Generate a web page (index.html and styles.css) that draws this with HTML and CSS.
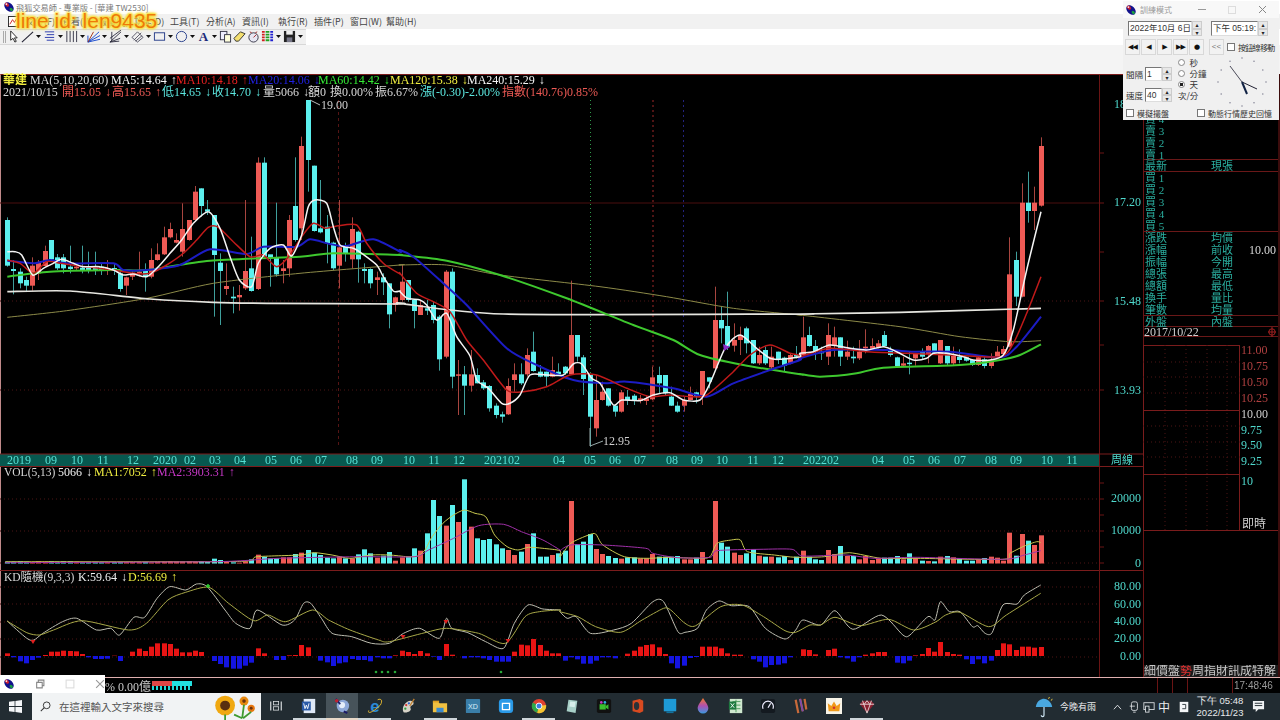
FILE: index.html
```html
<!DOCTYPE html>
<html lang="zh-Hant">
<head>
<meta charset="utf-8">
<title>飛狐交易師</title>
<link rel="stylesheet" href="styles.css">
</head>
<body>
<svg class="defs" width="0" height="0" aria-hidden="true">
  <symbol id="gem" viewBox="0 0 14 14">
    <ellipse cx="7" cy="7" rx="6.4" ry="4.4" transform="rotate(45 7 7)" fill="#12128c"/>
    <ellipse cx="4.6" cy="4.2" rx="2.8" ry="2" transform="rotate(45 4.6 4.2)" fill="#d02030"/>
    <ellipse cx="9.6" cy="10" rx="2.2" ry="1.6" transform="rotate(45 9.6 10)" fill="#18a040"/>
    <circle cx="4" cy="3.6" r="1" fill="#f4f4ff"/>
  </symbol>
  <symbol id="dd" viewBox="0 0 5 3"><path d="M0 0h5L2.500 3z" fill="#111"/></symbol>
</svg>
<div class="screen">
  <header class="titlebar">
    <svg class="ico13"><use href="#gem"/></svg>
    <span>飛狐交易師 - 專業版 - [華建 TW2530]</span>
  </header>
  <nav class="menubar">
    <svg class="doc" viewBox="0 0 12 12"><rect x=".5" y=".5" width="11" height="11" fill="#fff" stroke="#222"/><path d="M2 9l3-5 2 3 3-5" fill="none" stroke="#d02020"/></svg>
    <span>文件(F)</span><span>查看(V)</span><span>報價(Q)</span><span>功能(D)</span>
    <span>工具(T)</span><span>分析(A)</span><span>資訊(I)</span><span>執行(R)</span><span>插件(P)</span><span>窗口(W)</span><span>幫助(H)</span>
  </nav>
  <div class="toolbar">
    <i class="grip"></i>
    <svg class="tb" viewBox="0 0 14 14"><path d="M4 1v10l2.500-2 2 4 1.500-.8-2-3.700h3z" fill="#fff" stroke="#222"/></svg>
    <svg class="tb" viewBox="0 0 14 14"><path d="M1 13L13 2" stroke="#223" stroke-width="1.200"/></svg><svg class="dd"><use href="#dd"/></svg>
    <svg class="tb" viewBox="0 0 14 14"><path d="M2 2h10M4 5h8M2 8h10M4 11h8" stroke="#2233aa"/></svg><svg class="dd"><use href="#dd"/></svg>
    <svg class="tb" viewBox="0 0 14 14"><path d="M2 1v12M5.500 1v12M9 1v12M12.500 1v12" stroke="#334"/></svg><svg class="dd"><use href="#dd"/></svg>
    <svg class="tb" viewBox="0 0 14 14"><path d="M1 13L13 2M1 13L14 6M1 13l13-3M1 13V6" stroke="#1144cc"/><path d="M1 13L7 2" stroke="#a03010"/></svg><svg class="dd"><use href="#dd"/></svg>
    <svg class="tb" viewBox="0 0 14 14"><path d="M1 13L13 2M1 9L13 0M1 13L12 9M1 13l10-1M3 2v11" stroke="#334"/></svg><svg class="dd"><use href="#dd"/></svg>
    <svg class="tb" viewBox="0 0 14 14"><path d="M1 8l6-6 6 6-6 5z" fill="none" stroke="#556"/><path d="M3 11l8-8M5 12l7-6" stroke="#556"/></svg><svg class="dd"><use href="#dd"/></svg>
    <svg class="tb" viewBox="0 0 14 14"><rect x="1.500" y="3" width="11" height="8" fill="none" stroke="#223a88"/></svg><svg class="dd"><use href="#dd"/></svg>
    <svg class="tb" viewBox="0 0 14 14"><circle cx="7" cy="7" r="5.500" fill="none" stroke="#223a88"/></svg><svg class="dd"><use href="#dd"/></svg>
    <span class="tb-a">A</span><svg class="dd"><use href="#dd"/></svg>
    <svg class="tb" viewBox="0 0 14 14"><rect x="1.500" y="1.500" width="7" height="9" fill="#eef" stroke="#334"/><rect x="6" y="5" width="6.500" height="8" fill="#ffd" stroke="#334"/></svg>
    <svg class="tb" viewBox="0 0 14 14"><path d="M1 9l7-7 5 2-7 8H3z" fill="#f4e070" stroke="#333"/></svg>
    <svg class="tb" viewBox="0 0 14 14"><circle cx="7" cy="8" r="5" fill="#e8e8f4" stroke="#334"/><path d="M7 8l3-3M3 2l2 1M11 2L9 3" stroke="#a02020"/></svg>
    <svg class="tb" viewBox="0 0 14 14"><path d="M1 2h3M1 5h3M1 8h3M1 11h3" stroke="#d02020" stroke-width="2"/><path d="M5 2h4M5 5h4M5 8h4M5 11h4" stroke="#20a020" stroke-width="2"/><path d="M10 2h3M10 5h3M10 8h3M10 11h3" stroke="#2020d0" stroke-width="2"/></svg><svg class="dd"><use href="#dd"/></svg>
    <svg class="tb" viewBox="0 0 14 14"><path d="M1 1h12v12H1z" fill="#222"/><rect x="3.500" y="1" width="7" height="4" fill="#eee"/><rect x="4" y="8" width="6" height="5" fill="#778"/></svg><svg class="dd"><use href="#dd"/></svg>
  </div>
  <div class="blank"></div>

  <main class="workspace">
    <section class="charts">
      <svg id="price" class="pane pane-price" viewBox="0 75 1143 392"></svg>
      <svg id="vol" class="pane pane-vol" viewBox="0 467 1143 103"></svg>
      <svg id="kd" class="pane pane-kd" viewBox="0 570 1143 107"></svg>
    </section>
    <aside class="quote">
      <div class="q-head"></div>
      <div class="q-sec q-5">
        <div class="q-row"><span>賣 5</span></div><div class="q-row"><span>賣 4</span></div><div class="q-row"><span>賣 3</span></div><div class="q-row"><span>賣 2</span></div><div class="q-row"><span>賣 1</span></div>
      </div>
      <div class="q-sec">
        <div class="q-row"><span>最新</span><span>現張</span></div>
      </div>
      <div class="q-sec">
        <div class="q-row"><span>買 1</span></div><div class="q-row"><span>買 2</span></div><div class="q-row"><span>買 3</span></div><div class="q-row"><span>買 4</span></div><div class="q-row"><span>買 5</span></div>
      </div>
      <div class="q-sec">
        <div class="q-row"><span>漲跌</span><span>均價</span></div>
        <div class="q-row"><span>漲幅</span><span>前收</span><b>10.00</b></div>
        <div class="q-row"><span>振幅</span><span>今開</span></div>
        <div class="q-row"><span>總張</span><span>最高</span></div>
        <div class="q-row"><span>總額</span><span>最低</span></div>
        <div class="q-row"><span>換手</span><span>量比</span></div>
        <div class="q-row"><span>筆數</span><span>均量</span></div>
      </div>
      <div class="q-sec q-out">
        <div class="q-row"><span>外盤</span><span>內盤</span></div>
      </div>
      <div class="q-date"><span>2017/10/22</span><svg viewBox="0 0 8 10"><circle cx="4" cy="5" r="3.200" fill="none" stroke="#a02020"/><path d="M4 0v10M0 5h8" stroke="#a02020"/></svg></div>
      <svg id="mini" class="mini" viewBox="1143 346 135 186"></svg>
      <div class="q-fill"></div>
      <div class="q-tabs"><span>細</span><span>價</span><span>盤</span><span class="on">勢</span><span>周</span><span>指</span><span>財</span><span>訊</span><span>成</span><span>特</span><span>解</span></div>
    </aside>
  </main>

  <footer class="status">
    <div class="chip">
      <svg class="ico13"><use href="#gem"/></svg>
      <svg class="chip-i" viewBox="0 0 9 9"><path d="M1.500 3h5v5h-5zM3 3V1h5v5H6.500" fill="none" stroke="#888"/></svg>
      <svg class="chip-i" viewBox="0 0 9 9"><rect x="1" y="1" width="7" height="7" fill="none" stroke="#ddd"/></svg>
      <svg class="chip-i" viewBox="0 0 9 9"><path d="M1 1l7 7M8 1L1 8" stroke="#999"/></svg>
    </div>
    <span class="st-text">% 0.00億</span>
    <div class="meter"><div class="m-top"><i></i><i></i></div><div class="m-ticks"></div></div>
    <div class="st-right"><i></i><i></i><i></i><i></i><span>17:48:46</span></div>
  </footer>

  <div class="taskbar">
    <svg class="start" viewBox="0 0 13 13"><path d="M0 1.800L5.600 1v5.100H0zM6.400.9L13 0v6.100H6.400zM0 6.900h5.600V12L0 11.200zM6.400 6.900H13V13l-6.600-.9z" fill="#f4f6f8"/></svg>
    <div class="search">
      <svg class="mag" viewBox="0 0 14 14"><circle cx="8.500" cy="5.500" r="4.300" fill="none" stroke="#333" stroke-width="1.200"/><path d="M5.500 8.500L1 13" stroke="#333" stroke-width="1.300"/></svg>
      <span>在這裡輸入文字來搜尋</span>
      <svg class="flower" viewBox="0 0 46 30">
        <g fill="#f0a810"><circle cx="12" cy="14" r="11"/></g><circle cx="12" cy="14" r="5.500" fill="#5a2e10"/>
        <circle cx="33" cy="9" r="5" fill="#e88a10"/><circle cx="33" cy="9" r="2" fill="#6a3410"/>
        <circle cx="41" cy="17" r="4" fill="#e87810"/><circle cx="41" cy="17" r="1.600" fill="#6a3410"/>
        <path d="M33 13l-2 15M41 21l-9 7M22 24l9 4M12 24v6" stroke="#3f9a30" stroke-width="2" fill="none"/>
      </svg>
    </div>
    <div class="tasks">
      <div class="task tv"><svg viewBox="0 0 16 14"><path d="M1 1v12M15 1v12" stroke="#dfe3e6" stroke-width="1.500"/><rect x="4.500" y="1" width="7" height="4.500" fill="none" stroke="#dfe3e6"/><rect x="4.500" y="8" width="7" height="4.500" fill="none" stroke="#dfe3e6"/></svg></div>
      <div class="task run"><svg viewBox="0 0 18 18"><rect x="3" y="1" width="13" height="16" fill="#dfe8f6"/><rect x="1" y="4" width="10" height="10" fill="#2a5aa8"/><path d="M3 6l1.500 6 1.500-4 1.500 4L9 6" fill="none" stroke="#fff"/></svg></div>
      <div class="task active"><svg viewBox="0 0 18 18"><circle cx="10" cy="9" r="7" fill="#8ea8d8"/><circle cx="9" cy="8" r="3.500" fill="#e6eefa"/><path d="M2 1l5 6M11 15l4 2" stroke="#1a1a6a" stroke-width="2"/><circle cx="3" cy="3" r="2" fill="#c02030"/></svg></div>
      <div class="task run"><svg viewBox="0 0 18 18"><text x="9" y="15.500" text-anchor="middle" class="ie">e</text><path d="M2 14C0 18 6 17 15 8 18 3 16 0 12 2" fill="none" stroke="#f2c230"/></svg></div>
      <div class="task"><svg viewBox="0 0 18 18"><path d="M4 16C1 10 7 3 12 3c4 0 4 4 2 5s-3 2-2 4-3 5-8 4z" fill="#d8d4c8"/><circle cx="7" cy="8" r="1.300" fill="#d03030"/><circle cx="10" cy="6" r="1.300" fill="#3060d0"/><circle cx="6" cy="12" r="1.300" fill="#30a040"/><path d="M16 1l-5 8" stroke="#c08030" stroke-width="1.500"/></svg></div>
      <div class="task run"><svg viewBox="0 0 18 18"><path d="M1 4h6l1.500 2H17v10H1z" fill="#f0c040"/><rect x="1" y="3" width="7" height="2" fill="#e0a020"/><rect x="5" y="11" width="8" height="5" fill="#3a8ad0"/></svg></div>
      <div class="task"><svg viewBox="0 0 18 18"><rect x="1" y="1" width="16" height="16" rx="1" fill="#3a7ea8"/><text x="9" y="12.500" text-anchor="middle" class="xo">XD</text></svg></div>
      <div class="task"><svg viewBox="0 0 18 18"><rect x="1" y="1" width="16" height="16" rx="4" fill="#2a9ae8"/><path d="M5 6h8v7H5z" fill="none" stroke="#fff" stroke-width="1.500"/></svg></div>
      <div class="task run"><svg viewBox="0 0 18 18"><circle cx="9" cy="9" r="8" fill="#e04030"/><path d="M9 9L2 5a8 8 0 0 0 5 11.800z" fill="#2ea84a"/><path d="M9 9l8-1a8 8 0 0 1-10 8.800z" fill="#f4c430"/><circle cx="9" cy="9" r="3.300" fill="#3a7be0" stroke="#fff"/></svg></div>
      <div class="task"><svg viewBox="0 0 18 18"><path d="M5 2l10 1-2 14-10-2z" fill="#a8d0c8"/><path d="M7 4l6 .5-1 6-6-1z" fill="#d6eeea"/></svg></div>
      <div class="task"><svg viewBox="0 0 18 18"><rect x="1" y="1" width="16" height="16" rx="2" fill="#111"/><rect x="4" y="7" width="7" height="6" fill="#3ac030"/><path d="M11 9l3-2v6l-3-2z" fill="#3ac030"/><circle cx="6" cy="5" r="1.500" fill="#c83ac0"/><circle cx="10" cy="5" r="1.500" fill="#30b0e0"/></svg></div>
      <div class="task"><svg viewBox="0 0 18 18"><path d="M4 3l8-2 4 2v12l-4 2-8-2z" fill="#d84a20"/><ellipse cx="8.500" cy="9" rx="3" ry="4.500" fill="#2a3238"/></svg></div>
      <div class="task"><svg viewBox="0 0 18 18"><rect x="2" y="1" width="14" height="14" fill="#1e9ad6"/><rect x="5" y="15" width="8" height="2" fill="#14729e"/></svg></div>
      <div class="task"><svg viewBox="0 0 18 18"><defs><linearGradient id="drop" x1="0" y1="0" x2="0" y2="1"><stop offset="0" stop-color="#f0782a"/><stop offset=".5" stop-color="#b050b0"/><stop offset="1" stop-color="#3a9ae0"/></linearGradient></defs><path d="M9 0c3 5 6 8 6 11.500a6 6 0 0 1-12 0C3 8 6 5 9 0z" fill="url(#drop)"/></svg></div>
      <div class="task"><svg viewBox="0 0 18 18"><rect x="2" y="1" width="14" height="16" fill="#cfe8cf"/><path d="M5 4h9M5 8h9M5 12h9M9 2v14" stroke="#4a9a5a"/><rect x="1" y="4" width="8" height="9" fill="#1f7a40"/><path d="M3 6l4 5M7 6l-4 5" stroke="#fff"/></svg></div>
      <div class="task"><svg viewBox="0 0 18 18"><rect x="1" y="1" width="16" height="16" rx="2" fill="#141a20"/><path d="M3.500 12a6 6 0 1 1 11 0" fill="none" stroke="#eef" stroke-width="1.300"/><path d="M9 11l3-5" stroke="#eef" stroke-width="1.300"/></svg></div>
      <div class="task"><svg viewBox="0 0 18 18"><path d="M3 2l3 15M8 1l3 14M13 1l2 12" stroke-width="2.500" fill="none" stroke="#c86a3a"/><path d="M8 1l3 14" stroke="#7a4ab0" stroke-width="2"/></svg></div>
      <div class="task"><svg viewBox="0 0 18 18"><rect x="0" y="0" width="18" height="18" fill="#f8f4e8"/><path d="M2 6l4 3 3-5 3 5 4-3-1 9H3z" fill="#f09a1a"/><circle cx="9" cy="11" r="1.500" fill="#d03030"/></svg></div>
      <div class="task run"><svg viewBox="0 0 18 18"><path d="M4 3h10l3 4-8 10L1 7z" fill="#8a2030"/><path d="M1 7h16M4 3l5 14 5-14M6 7l3-4 3 4" stroke="#eadada" fill="none"/></svg></div>
    </div>
    <div class="tray">
      <svg class="weather" viewBox="0 0 22 24"><path d="M2 12C3 5 8 3 11 3s8 3 9 9z" fill="#4aa8e0"/><path d="M11 12v9c0 2-3 2-3 0" stroke="#cfe6f4" stroke-width="1.300" fill="none"/><path d="M17 1l-1 2M20 3l-1 2" stroke="#f4d040"/></svg>
      <span class="t-weather">今晚有雨</span>
      <svg class="t-caret" viewBox="0 0 10 6"><path d="M1 5.500L5 1l4 4.500" fill="none" stroke="#e8eaec"/></svg>
      <svg class="t-i t-mic" viewBox="0 0 14 14"><rect x="4" y="1" width="7" height="10" rx="2" fill="none" stroke="#dfe3e6"/><path d="M2 6h6M6 13h3" stroke="#dfe3e6"/></svg>
      <svg class="t-i t-net" viewBox="0 0 14 14"><rect x="1" y="2" width="12" height="8" fill="none" stroke="#dfe3e6"/><rect x="3" y="6" width="4" height="7" fill="#1f2a30" stroke="#dfe3e6"/></svg>
      <span class="t-ime">中</span>
      <svg class="t-i t-pad" viewBox="0 0 14 14"><rect x="2" y="1" width="10" height="12" fill="#f4f6f8"/><path d="M5 4h4v5H5" fill="none" stroke="#1f2a30"/></svg>
      <div class="t-clock"><span>下午 05:48</span><span>2022/11/23</span></div>
      <svg class="t-note" viewBox="0 0 14 14"><path d="M1 1h12v9H7l-3 3v-3H1z" fill="#f0f2f4"/><path d="M3 3.500h8M3 6h8" stroke="#1f2a30"/></svg>
    </div>
  </div>

  <div class="watermark">line id: len9435</div>

  <div class="dialog">
    <div class="d-title">
      <svg class="ico13"><use href="#gem"/></svg><span>訓練模式</span>
      <div class="d-ctrl"><i class="c-min"></i><i class="c-max"></i><svg viewBox="0 0 9 9"><path d="M1 1l7 7M8 1L1 8" stroke="#888"/></svg></div>
    </div>
    <div class="d-row d-fields">
      <div class="field f-date">2022年10月 6日</div><div class="spin"><i>▴</i><i>▾</i></div>
      <div class="field f-time">下午 05:19:</div><div class="spin"><i>▴</i><i>▾</i></div>
    </div>
    <div class="d-row d-btns">
      <button>◀◀</button><button>◀</button><button>▶</button><button>▶▶</button><button>●</button>
      <button class="back">&lt;&lt;</button>
      <label class="chk c-line"><i></i>按鈕線移動</label>
    </div>
    <div class="d-mid">
      <div class="d-inputs">
        <div class="d-inp"><span>間隔</span><div class="field f-num">1</div><div class="spin"><i>▴</i><i>▾</i></div></div>
        <div class="d-inp"><span>速度</span><div class="field f-num">40</div><div class="spin"><i>▴</i><i>▾</i></div></div>
      </div>
      <div class="d-radios">
        <label><i></i>秒</label><label><i></i>分鐘</label><label><i class="on"></i>天</label><span>次/分</span>
      </div>
      <svg class="clock" viewBox="-28 -28 56 56">
        <g fill="#889">
          <circle cx="0" cy="-24" r=".8"/><circle cx="12" cy="-20.800" r=".8"/><circle cx="20.800" cy="-12" r=".8"/><circle cx="24" cy="0" r=".8"/><circle cx="20.800" cy="12" r=".8"/><circle cx="12" cy="20.800" r=".8"/><circle cx="0" cy="24" r=".8"/><circle cx="-12" cy="20.800" r=".8"/><circle cx="-20.800" cy="12" r=".8"/><circle cx="-24" cy="0" r=".8"/><circle cx="-20.800" cy="-12" r=".8"/><circle cx="-12" cy="-20.800" r=".8"/>
        </g>
        <path d="M0 0L-12 -16" stroke="#223" stroke-width=".8"/>
        <path d="M0 0L15 7" stroke="#223" stroke-width="1"/>
        <path d="M0 0L5 12" stroke="#112244" stroke-width="2"/>
      </svg>
    </div>
    <div class="d-row d-foot">
      <label class="chk c-a"><i></i>模擬撮盤</label>
      <label class="chk"><i></i>動態行情歷史回憶</label>
    </div>
  </div>
</div>
<script src="app.js"></script>
</body>
</html>
```

FILE: styles.css
```css
*{box-sizing:border-box}
html,body{margin:0;height:720px;width:1280px;overflow:hidden;background:#000}
.defs{position:absolute}
.screen{position:relative;width:1280px;height:720px;display:flex;flex-direction:column;background:#fff;font-family:"Liberation Serif","Noto Sans CJK TC",serif;filter:blur(.35px)}
.ico13{width:12px;height:12px;flex:none}
.titlebar{height:14px;display:flex;align-items:center;gap:1px;padding-left:3px;background:#fff;font:8.200px "Noto Sans CJK TC",sans-serif;color:#7a7a7a}
.menubar{height:15px;display:flex;align-items:center;background:#f1f1f1;font:9px "Noto Sans CJK TC",sans-serif;color:#444;padding-left:8px}
.menubar .doc{width:11px;height:11px;margin-right:7px;flex:none}
.menubar span{width:36px;flex:none;white-space:nowrap}
.toolbar{height:16px;width:306px;display:flex;align-items:center;background:#f0f0f0;border-top:1px solid #d8d8d8;border-bottom:1px solid #d8d8d8;padding-left:3px;padding-bottom:1px}
.grip{width:3px;height:12px;border-left:1px solid #aaa;border-right:1px solid #aaa;margin-right:1px;flex:none}
.tb{width:13px;height:13px;flex:none}
.tb + .tb{margin-left:1px}
.dd{width:5px;height:3px;margin:0 2px;flex:none}
.tb-a{font:bold 13px "Liberation Serif",serif;color:#1a2a7a;width:13px;text-align:center;line-height:13px;flex:none}
.blank{height:29px;background:#f4f4f4}
.workspace{height:603px;display:flex;background:#000;border-top:1px solid #7a1c1c;border-left:1px solid #c08a8a;border-right:2px solid #3c0c0c}
.charts{width:1142px;display:flex;flex-direction:column;flex:none}
.pane{display:block;width:1143px;margin-left:-1px;flex:none;overflow:visible}
.pane-price{height:392px}
.pane-vol{height:103px}
.pane-kd{height:107px}
.quote{width:135px;flex:none;display:flex;flex-direction:column;border-left:1px solid #6a1414;font-size:11px;color:#2aae9f;line-height:12px}
.q-head{height:25px;flex:none}
.q-sec{height:12px;flex:none;border-bottom:1px solid #6a1818;padding-left:1px}
.q-sec:has(.q-row:nth-child(5)){height:60px}
.q-sec:has(.q-row:nth-child(7)){height:84px}
.q-sec.q-5{height:61px;padding-top:1px}
.q-sec.q-out{height:11px}
.q-row{height:12px;display:flex;white-space:nowrap;position:relative}
.q-row span{width:66px;flex:none}
.q-row b{font-weight:normal;font-size:12px;color:#d8d8d8;position:absolute;right:2px}
.q-date{height:10px;flex:none;display:flex;justify-content:space-between;align-items:center;color:#cfcfcf;border-bottom:1px solid #6a1818;padding:1px 2px 0 0;font-size:12px}
.q-date svg{width:8px;height:10px}
.mini{width:135px;height:186px;margin:8px 0 0 -1px;flex:none;display:block;overflow:visible}
.q-fill{flex:1}
.q-tabs{height:12px;display:flex;background:#1a1a1a;color:#c8c8c8;font-size:12px;line-height:12px;overflow:hidden;flex:none}
.q-tabs span{width:12px;flex:none}
.q-tabs .on{color:#e23030}
.status{height:16px;display:flex;align-items:center;background:#000;border-top:1px solid #e0b0b0;color:#c8c8c8;font-size:12px;position:relative}
.chip{width:105px;height:18px;margin-top:-3px;background:#fff;display:flex;align-items:center;padding-left:3px;flex:none;position:relative;z-index:1}
.chip-i{width:10px;height:10px;margin-left:20px}
.chip-i:first-of-type{margin-left:10px}
.st-text{width:47px;flex:none}
.meter{width:40px;flex:none}
.m-top{display:flex;height:5px}
.m-top i{width:20px;background:#e04545}
.m-top i+i{background:#22e0e0}
.m-ticks{height:4px;background:repeating-linear-gradient(90deg,#22d8d8 0 2px,#000 2px 4px)}
.st-right{margin-left:auto;display:flex;align-items:center;height:100%;width:123px;color:#9a9a9a;font:10px "Liberation Sans",sans-serif}
.st-right i{width:1px;height:15px;background:#6a1414;margin-right:14px}
.st-right i:nth-child(4){margin-left:30px;margin-right:1px}
.taskbar{height:27px;display:flex;align-items:center;background:#222c32;color:#e8eaec;flex:none}
.start{width:13px;height:13px;margin:0 10px 0 9px;flex:none}
.search{width:229px;height:27px;background:#f1f3f4;display:flex;align-items:center;padding-left:8px;color:#555;font:10.500px "Noto Sans CJK TC",sans-serif;flex:none;position:relative;white-space:nowrap}
.mag{width:11px;height:11px;margin-right:8px;flex:none}
.flower{width:46px;height:27px;position:absolute;right:3px;top:0}
.tasks{display:flex;margin-left:-1px;flex:none}
.task{width:32.800px;height:27px;display:flex;align-items:center;justify-content:center;flex:none;border-bottom:2px solid transparent}
.task svg{width:16px;height:16px}
.task.tv svg{width:12px;height:12px}
.task.run{border-bottom-color:#cfd6da}
.task.active{background:#47535a;border-bottom-color:#e8d8c8}
.ie{font:bold 19px "Liberation Sans",sans-serif;fill:#2a8ad8}
.xo{font:8px "Liberation Sans",sans-serif;fill:#d8eef8}
.tray{margin-left:auto;display:flex;align-items:center;height:27px;flex:none;padding-right:15.500px}
.weather{width:20px;height:22px;margin-right:6px;flex:none}
.t-weather{font:9px "Noto Sans CJK TC",sans-serif;width:36px;white-space:nowrap;margin-right:16.500px;flex:none}
.t-caret{width:9px;height:6px;margin-right:6.500px;flex:none}
.t-i{width:12px;height:12px;flex:none}
.t-net{margin-left:3px}
.t-ime{font:12px/12px "Noto Sans CJK TC",sans-serif;margin:0 8px 0 3px;width:12px;flex:none}
.t-clock{display:flex;flex-direction:column;align-items:center;font:9.500px/12px "Liberation Sans",sans-serif;width:44px;margin:0 9.500px 0 8px;white-space:nowrap;flex:none}
.t-note{width:13px;height:13px;flex:none}
.watermark{position:absolute;left:16px;top:10px;font:21px/22px "Liberation Sans",sans-serif;color:#ee7a08;text-shadow:0 0 2px #f8e040,1px 1px 2px #f8e040,-1px -1px 2px #f8e040,1px -1px 2px #f8e040,-1px 1px 2px #f8e040,0 0 5px #f8e040;white-space:nowrap}
.dialog{position:absolute;left:1123px;top:1px;width:156px;height:119px;background:#f0f0f0;display:flex;flex-direction:column;font:8.500px "Noto Sans CJK TC",sans-serif;color:#333;padding:0 3px}
.d-title{height:17px;margin:0 -3px;padding-left:2px;background:#f8f8f8;display:flex;align-items:center;gap:3px;color:#9a9a9a;flex:none;font-size:8px}
.d-ctrl{margin-left:auto;display:flex;align-items:center;padding-right:12px}
.c-min{width:8px;height:1px;background:#999;margin-right:22px}
.c-max{width:8px;height:8px;border:1px solid #ddd;margin-right:22px}
.d-ctrl svg{width:9px;height:9px}
.d-row{display:flex;align-items:center;flex:none}
.d-fields{height:15px;margin-top:3px;padding-left:2px}
.field{height:15px;background:#fff;border:1px solid #777;border-right-color:#ddd;border-bottom-color:#ddd;font:8.500px/13px "Liberation Sans","Noto Sans CJK TC",sans-serif;padding-left:1px;white-space:nowrap;flex:none;overflow:hidden}
.f-date{width:64px}
.f-time{width:47px;margin-left:9px}
.spin{width:10px;height:15px;display:flex;flex-direction:column;flex:none}
.spin i{flex:1;background:#e8e8e8;border:1px solid #ccc;font:normal 6px/5px "DejaVu Sans",sans-serif;text-align:center;overflow:hidden;color:#222}
.d-btns{height:16px;margin:3px 0 0 -1px}
.d-btns button{width:15px;height:16px;margin:0 1px 0 0;padding:0;background:#f2f2f2;border:1px solid #d8d8d8;font:7px/14px "DejaVu Sans",sans-serif;color:#111;letter-spacing:-1px}
.d-btns .back{margin-left:4px;color:#777;letter-spacing:0;font:8px/14px "Liberation Sans",sans-serif}
.chk{display:flex;align-items:center;font:8px "Noto Sans CJK TC",sans-serif;white-space:nowrap;color:#333;flex:none}
.chk i{width:8px;height:8px;background:#fff;border:1px solid #777;margin-right:3px;flex:none}
.c-line{margin-left:2px;letter-spacing:-.7px}
.d-mid{display:flex;height:49px;margin-top:5px;flex:none}
.d-inputs{width:52px;display:flex;flex-direction:column;gap:7px;padding-top:7px;flex:none}
.d-inp{display:flex;align-items:center;height:14px}
.d-inp>span{width:19px;white-space:nowrap;flex:none}
.d-inp .field,.d-inp .spin{height:14px}
.f-num{width:17px;margin-right:0}
.d-radios{width:34px;display:flex;flex-direction:column;line-height:11px;margin-top:-3px;flex:none}
.d-radios label{display:flex;align-items:center;white-space:nowrap}
.d-radios i{width:7px;height:7px;border-radius:50%;background:#fff;border:1px solid #888;margin:0 4.500px 0 0;flex:none}
.d-radios i.on{background:radial-gradient(circle,#222 0 1.500px,#fff 2px)}
.clock{width:56px;height:56px;margin:-6px 0 0 2px;flex:none}
.d-foot{margin-top:-3px;height:14px;padding-left:0}
.c-a{width:71px}
```

FILE: app.js
```js
(function () {
  var NS = 'http://www.w3.org/2000/svg';
  var RED = '#ee5a55', CY = '#5cf0ee', REDW = '#a8453f', CYW = '#3f9f9c';
  function X(i) { return 7 + 6.265 * i; }
  function el(p, tag, attrs, txt) {
    var e = document.createElementNS(NS, tag);
    for (var k in attrs) e.setAttribute(k, attrs[k]);
    if (txt != null) e.textContent = txt;
    p.appendChild(e);
    return e;
  }
  function line(p, x1, y1, x2, y2, c, w, dash) {
    var a = { x1: x1, y1: y1, x2: x2, y2: y2, stroke: c, 'stroke-width': w || 1 };
    if (dash) a['stroke-dasharray'] = dash;
    return el(p, 'line', a);
  }
  function text(p, x, y, s, c, o) {
    o = o || {};
    var a = { x: x, y: y + 4, fill: c, 'font-size': o.size || 12,
      'font-family': '"Liberation Serif","Noto Sans CJK TC",serif' };
    if (o.anchor) a['text-anchor'] = o.anchor;
    if (o.bold) a['font-weight'] = 'bold';
    var t = el(p, 'text', a);
    var m = /^(.*?) ([↑↓])$/.exec(s);
    if (m) {
      t.appendChild(document.createTextNode(m[1] + ' '));
      el(t, 'tspan', { 'font-weight': 'bold', dx: 1 }, m[2]);
    } else {
      t.textContent = s;
    }
    return t;
  }
  /* smooth curve through the points of one or more crops */
  function poly(p, segs, c, w) {
    var pts = [];
    segs.forEach(function (s) {
      var m = s[0], d = s[1];
      for (var i = 0; i < d.length; i += 2) pts.push([m.x0 + d[i] / m.sx, m.y0 + d[i + 1] / 3]);
    });
    var f = function (n) { return n.toFixed(1); };
    var dstr = 'M' + f(pts[0][0]) + ' ' + f(pts[0][1]);
    for (var i = 0; i < pts.length - 1; i++) {
      var a = pts[Math.max(i - 1, 0)], b = pts[i], e = pts[i + 1], g = pts[Math.min(i + 2, pts.length - 1)];
      dstr += 'C' + f(b[0] + (e[0] - a[0]) / 8) + ' ' + f(b[1] + (e[1] - a[1]) / 8) + ' ' +
        f(e[0] - (g[0] - b[0]) / 8) + ' ' + f(e[1] - (g[1] - b[1]) / 8) + ' ' + f(e[0]) + ' ' + f(e[1]);
    }
    el(p, 'path', { d: dstr, fill: 'none', stroke: c, 'stroke-width': w, 'stroke-linejoin': 'round' });
  }
  var Z6 = { x0: 0, y0: 100, sx: 3 }, Z7 = { x0: 400, y0: 240, sx: 3 }, Z10 = { x0: 800, y0: 130, sx: 3 };
  var Z8 = { x0: 0, y0: 460, sx: 2.8 }, Z9 = { x0: 560, y0: 460, sx: 2.8 };

  /* candles: body top, body bottom, wick top, wick bottom, 0 red / 1 cyan, in crop coordinates */
  var A = [
    [360,497,352,500,1],[507,513,480,583,1],[515,550,505,565,1],[540,557,530,575,1],[497,557,472,572,0],[488,520,480,540,0],[453,498,437,500,0],[420,478,420,480,1],
    [472,505,462,510,1],[472,505,462,520,1],[500,507,437,520,1],[500,505,490,510,0],[503,512,437,520,1],[503,512,455,520,1],[503,512,455,525,1],[500,510,490,525,1],
    [504,507,480,525,0],[504,507,490,525,1],[520,567,505,575,1],[532,557,530,585,0],[518,530,510,540,0],[515,520,455,530,0],[510,530,490,575,1],[480,530,445,535,0],
    [463,480,430,482,0],[412,463,380,465,0],[387,412,368,415,0],[420,428,400,430,0],[387,455,310,470,0],[360,420,360,422,0],[275,360,258,365,0],[265,318,265,350,1],
    [328,335,300,345,1],[345,465,345,650,1],[488,513,460,675,1],[558,567,490,585,0],[590,595,560,640,1],[585,592,555,632,0],[513,565,300,570,0],[505,573,410,575,1],
    [188,567,172,570,0],[188,470,172,470,1],[463,472,465,560,1],[472,523,308,530,1],[505,513,480,550,0],[360,505,345,530,0],[318,420,172,425,1],[138,385,110,420,0],
    [0,180,0,275,1],[197,393,197,395,1],[385,397,240,400,1],[380,430,345,490,1],[428,505,425,510,1],[442,497,300,565,0],[440,462,428,485,1],[387,478,352,505,0],
    [395,478,392,548,1],[507,513,490,550,1],[507,550,505,565,1],[532,540,515,585,0],[532,547,520,585,1],[550,643,550,685,1],[592,615,590,635,0]
  ];
  var B = [
    [125,180,75,185,0],[120,180,120,185,1],[180,213,180,265,1],[195,225,180,225,0],[205,212,180,225,1],[195,240,185,250,1],[230,358,225,392,1],[95,350,90,355,0],
    [95,410,85,445,1],[403,407,360,525,0],[403,437,378,525,1],[403,437,330,455,0],[405,430,385,430,1],[427,445,420,450,1],[438,505,435,515,1],[497,525,490,535,1],
    [523,530,515,548,1],[438,523,415,525,0],[403,420,370,455,0],[403,430,370,435,1],[345,403,325,410,0],[335,393,275,395,1],[395,410,375,412,1],[395,410,395,440,1],
    [390,410,350,412,0],[395,403,370,405,1],[380,400,378,405,1],[285,403,122,405,0],[285,350,285,365,1],[352,417,345,465,1],[405,530,405,620,1],[480,565,405,590,0],
    [455,480,425,482,0],[445,497,445,500,1],[497,515,495,530,1],[457,515,450,518,0],[470,480,450,495,1],[467,483,462,495,1],[475,483,465,490,0],[475,483,465,495,0],
    [412,478,380,480,0],[405,430,380,460,1],[405,460,405,465,1],[470,497,440,498,1],[497,515,485,518,1],[480,497,470,515,0],[462,480,440,480,0],[457,470,455,490,1],
    [393,468,393,495,0],[412,425,412,445,1],[240,385,140,387,0],[240,265,200,310,1],[258,320,155,330,1],[300,317,250,335,0],[285,300,260,345,0],[265,310,260,340,1],
    [300,370,300,372,1],[345,370,320,375,0],[330,370,320,375,1],[350,382,320,390,0],[335,360,335,372,1],[353,377,350,395,1],[345,370,340,373,0],[345,350,318,355,1]
  ];
  var C = [
    [622,675,560,680,0],[615,648,590,650,1],[648,665,630,690,1],[665,670,650,690,1],[615,680,580,705,0],[622,645,590,680,0],[622,680,622,708,1],[665,680,632,690,0],
    [680,685,650,700,1],[665,685,630,690,0],[650,655,598,670,0],[648,658,625,660,0],[640,652,630,655,0],[615,648,603,650,1],[663,675,650,680,1],[682,708,680,710,1],
    [700,707,680,710,0],[698,702,665,733,1],[672,685,672,707,0],[665,680,655,690,1],[648,672,645,700,0],[640,668,640,672,1],[630,700,630,702,0],[648,700,648,705,1],
    [678,700,650,705,0],[680,690,658,700,1],[682,692,680,695,1],[690,705,688,708,1],[682,705,680,708,0],[688,708,680,715,1],[690,708,670,715,0],[665,680,648,682,0],
    [657,672,648,675,0],[433,650,322,652,0],[390,500,365,528,1],[218,500,160,502,0],[218,243,125,278,1],[218,243,170,300,0],[48,227,22,230,0]
  ];
  var candles = [];
  [[A, 100], [B, 240], [C, 130]].forEach(function (s) {
    s[0].forEach(function (c) {
      candles.push({ t: s[1] + c[0] / 3, b: s[1] + c[1] / 3, wt: s[1] + c[2] / 3, wb: s[1] + c[3] / 3, cy: c[4] });
    });
  });

  /* price pane */
  var P = document.getElementById('price');
  line(P, 0, 203, 1099, 203, '#4a0f0f');
  line(P, 0, 301, 1099, 301, '#4c1515', 1, '1 3');
  line(P, 0, 390, 1099, 390, '#4c1515', 1, '1 3');
  line(P, 338.5, 100, 338.5, 447, '#551414', 1, '3 3');
  line(P, 590.5, 100, 590.5, 447, '#2f9a4a', 1, '1 3');
  line(P, 653, 100, 653, 447, '#a02828', 1, '2 3');
  line(P, 683.5, 100, 683.5, 447, '#23237e', 1, '2 3');
  line(P, 1099.5, 75, 1099.5, 467, '#6a1414');
  [153, 203, 252, 301, 345, 390].forEach(function (y) { line(P, 1099, y, 1104, y, '#6a1414'); });

  candles.forEach(function (c, i) {
    var x = Math.round(X(i));
    line(P, x + .5, c.wt, x + .5, c.wb, c.cy ? CYW : REDW);
    el(P, 'rect', { x: x - 2, y: c.t, width: 5, height: Math.max(c.b - c.t, 1.5), fill: c.cy ? CY : RED });
  });

  poly(P, [[Z6,[22,652,200,632,440,595,640,550,900,520,1200,495]],[Z7,[0,75,140,75,300,105,600,140,800,170,1000,205,1200,225]],[Z10,[0,555,300,590,480,620,630,635,723,632]]], '#8c8a48', 1);
  poly(P, [[Z6,[22,575,210,573,450,597,640,607,800,610,1200,612]],[Z7,[0,190,310,222,1200,222]],[Z10,[0,552,300,547,723,535]]], '#e6e6e0', 1.7);
  poly(P, [[Z6,[22,530,150,515,350,510,440,510,630,482,900,470,1000,460,1200,465]],[Z7,[0,45,140,62,300,105,500,175,700,255,820,300,900,345,1030,375,1200,403]],[Z10,[0,732,60,740,170,730,250,713,480,705,600,690,660,675,723,643]]], '#3ec82e', 2);
  poly(P, [[Z6,[22,482,100,490,150,480,200,490,340,490,370,510,440,510,540,495,630,448,740,462,790,440,890,440,930,418,990,432,1040,438,1120,418,1200,455]],[Z7,[0,30,40,50,130,130,200,195,320,325,410,375,520,420,620,430,680,425,820,445,920,470,1000,430,1110,390,1200,360]],[Z10,[0,685,100,660,260,660,340,665,450,665,600,682,650,650,723,560]]], '#1c1cc4', 2);
  poly(P, [[Z6,[22,480,60,490,100,520,140,485,180,490,230,497,340,510,400,520,450,520,500,495,550,460,590,420,625,382,655,382,700,425,750,470,790,465,830,500,870,465,905,410,940,370,975,385,1010,378,1070,375,1100,430,1150,490,1200,522]],[Z7,[0,100,50,160,100,185,150,215,200,300,250,360,320,450,370,455,440,440,510,405,590,405,680,445,750,470,810,465,870,470,920,465,1000,395,1050,345,1110,315,1170,340,1200,345]],[Z10,[0,680,90,655,200,665,320,670,450,675,600,680,640,640,680,550,723,440]]], '#c01a1a', 1.5);
  poly(P, [[Z6,[22,455,45,455,65,465,98,525,130,505,160,490,185,478,220,490,248,500,300,500,340,510,370,525,400,522,440,530,475,500,510,460,545,420,580,370,625,335,660,385,690,470,718,540,755,560,775,490,810,445,850,435,875,468,905,405,925,320,945,300,980,310,1000,380,1020,435,1060,445,1085,460,1130,495,1150,530,1180,573,1200,573]],[Z7,[0,155,22,175,60,180,80,195,110,240,140,220,170,290,210,348,230,420,265,445,305,490,330,490,360,465,390,405,440,405,490,405,520,372,545,372,575,415,600,430,640,495,665,480,720,482,760,465,810,458,850,480,900,480,930,430,975,325,1020,285,1070,325,1110,355,1140,358,1200,350]],[Z10,[0,670,40,665,90,645,150,655,200,660,250,650,290,665,340,690,380,685,400,670,440,670,490,680,520,690,570,690,610,675,640,600,680,420,723,245]]], '#f4f4f4', 1.5);
  el(P, 'path', { d: 'M723 344l7 3-6 4z', fill: '#8a2ac8' });

  line(P, 310, 100, 320, 105, '#bbb');
  text(P, 321, 105, '19.00', '#cfcfcf');
  el(P, 'polyline', { points: '590,428 590,446 603,441', fill: 'none', stroke: '#9aa', 'stroke-width': 1 });
  text(P, 603, 441, '12.95', '#cfcfcf');

  /* legend */
  [[3,80,'華建','#f4f040',1],[30,80,'MA(5,10,20,60)','#d8d8d8'],[111,80,'MA5:14.64 ↑','#f4f4f4'],[176,80,'MA10:14.18 ↑','#e82020'],[248,80,'MA20:14.06 ↓','#2020e0'],[318,80,'MA60:14.42 ↓','#34e834'],[390,80,'MA120:15.38 ↓','#f0ee40'],[467,80,'MA240:15.29 ↓','#f4f4f4'],
   [3,92,'2021/10/15','#d8d8d8'],[62,92,'開15.05 ↓','#ee5a55'],[112,92,'高15.65 ↑','#ee5a55'],[162,92,'低14.65 ↓','#5ce8e0'],[212,92,'收14.70 ↓','#5ce8e0'],[263,92,'量5066 ↓','#d8d8d8'],[308,92,'額0','#d8d8d8'],[330,92,'換0.00%','#d8d8d8'],[375,92,'振6.67%','#d8d8d8'],[420,92,'漲(-0.30)-2.00%','#5ce8e0'],[502,92,'指數(140.76)0.85%','#ee5a55']
  ].forEach(function (l) { text(P, l[0], l[1], l[2], l[3], { bold: l[4] }); });

  /* price axis */
  [[17.20,202],[15.48,301],[13.93,390]].forEach(function (r) { text(P, 1141, r[1], r[0].toFixed(2), '#4fd8cc', { anchor: 'end' }); });
  text(P, 1114, 104, '18', '#4fd8cc');

  /* date axis */
  el(P, 'rect', { x: 0, y: 454, width: 1099, height: 13, fill: '#07584f' });
  line(P, 0, 454, 1143, 454, '#7a1c1c');
  line(P, 0, 466.500, 1143, 466.500, '#7a1c1c');
  [['2019',19],['09',51],['10',77],['11',103],['12',133],['2020',165],['02',190],['03',215],['04',240],['05',271],['06',296],['07',321],['08',352],['09',377],['10',409],['11',434],['12',459],['202102',502],['04',559],['05',590],['06',615],['07',640],['08',672],['09',697],['10',722],['11',753],['12',778],['202202',821],['04',878],['05',909],['06',934],['07',960],['08',991],['09',1016],['10',1047],['11',1072]].forEach(function (d) {
    text(P, d[1], 460, d[0], '#55e0d4', { anchor: 'middle' });
  });
  text(P, 1122, 460, '周線', '#4fd8cc', { anchor: 'middle', size: 11 });

  /* volume pane */
  var V = document.getElementById('vol');
  [499, 531, 563].forEach(function (y) { line(V, 0, y, 1099, y, '#4c1515', 1, '1 3'); });
  line(V, 1099.5, 467, 1099.5, 570, '#6a1414');
  [483, 499, 515, 531, 547, 563].forEach(function (y) { line(V, 1099, y, 1104, y, '#6a1414'); });
  var vt = [305,305,304,305,306,304,305,304,305,304,304,305,306,306,306,306,306,306,306,306,306,306,306,307,305,305,304,305,305,304,305,303,306,296,300,306,307,308,304,298,284,290,295,295,292,292,282,278,270,278,285,293,295,290,295,295,283,268,280,293,287,276,302,292,290,265,272,220,120,168,197,135,186,58,200,235,240,237,253,265,270,285,275,252,220,290,290,285,280,272,123,252,245,222,267,282,288,294,296,292,292,295,295,282,290,290,290,288,298,298,293,276,300,123,248,260,278,285,280,268,287,290,290,292,288,300,290,272,290,298,300,270,282,258,288,288,298,288,300,295,293,293,288,298,280,295,302,303,304,290,288,292,295,302,302,298,294,290,293,302,218,287,222,242,255,226];
  vt.forEach(function (t, i) {
    var y = 460 + t / 3;
    el(V, 'rect', { x: Math.round(X(i)) - 2, y: y, width: 5, height: 563.5 - y, fill: candles[i].cy ? CY : RED });
  });
  poly(V, [[Z8,[15,305,600,305,700,302,720,290,840,285,880,278,930,285,980,295,1040,285,1090,285,1140,290,1170,288,1190,270,1210,230,1240,190,1270,165,1300,150,1330,160,1360,170,1385,225,1420,260,1450,270,1480,262,1520,265,1568,272]],[Z9,[0,290,30,250,80,225,100,222,120,255,180,290,250,295,300,292,390,295,420,290,440,250,480,240,505,240,525,275,600,285,660,292,740,290,810,278,900,295,1000,295,1240,298,1260,280,1300,258,1335,245,1346,248]]], '#c8c850', 1);
  poly(V, [[Z8,[15,308,600,305,780,295,1000,290,1160,290,1200,270,1270,235,1340,197,1410,193,1460,215,1520,240,1568,270]],[Z9,[0,272,30,255,120,255,240,265,260,280,330,293,420,292,440,272,560,268,650,268,680,288,800,285,880,295,1000,292,1240,298,1300,285,1346,272]]], '#a030a8', 1);
  text(V, 4, 472, 'VOL(5,13)', '#d8d8d8', { size: 11.500 });
  text(V, 58, 472, '5066 ↓', '#f0f0f0');
  text(V, 94, 472, 'MA1:7052 ↑', '#f0ee40');
  text(V, 157, 472, 'MA2:3903.31 ↑', '#c838c8');
  [['20000',498],['10000',530],['0',563]].forEach(function (r) { text(V, 1141, r[1], r[0], '#4fd8cc', { anchor: 'end' }); });

  /* kd pane */
  var K = document.getElementById('kd');
  [587, 604, 622, 639, 657].forEach(function (y) { line(K, 0, y, 1099, y, '#4c1515', 1, '1 3'); });
  line(K, 0, 570.500, 1143, 570.500, '#7a1c1c');
  line(K, 1099.5, 570, 1099.5, 677, '#6a1414');
  var h = [580,592,604,610,600,593,585,575,575,572,573,574,582,592,597,597,596,587,603,588,575,566,573,560,550,550,552,566,577,577,572,576,588,603,612,622,626,626,617,608,565,580,588,600,600,586,585,555,562,588,602,607,618,610,607,597,600,600,604,592,595,595,586,572,576,582,573,580,590,600,552,584,588,595,592,592,595,600,605,605,605,575,554,556,537,555,572,580,580,602,592,598,611,611,602,592,592,595,588,581,572,560,555,553,562,582,610,625,617,594,591,560,560,560,565,580,584,584,588,598,605,622,615,614,610,592,588,568,570,583,588,570,566,592,595,605,592,584,580,576,576,588,608,610,602,586,582,564,575,546,576,582,584,598,612,598,610,602,570,550,553,570,560,560,563,561];
  h.forEach(function (t, i) {
    var base = 656, y = 460 + t / 3, blue = t > 588;
    if (t === 588) return;
    el(K, 'rect', { x: Math.round(X(i)) - 2, y: blue ? base : y, width: 5, height: Math.abs(y - base), fill: blue ? '#1414e0' : '#e81414' });
  });
  poly(K, [[Z8,[20,483,75,535,95,540,120,520,175,485,215,475,270,510,310,505,335,525,375,472,405,472,440,415,475,380,520,390,550,372,580,380,630,450,660,490,700,505,720,450,790,495,825,480,850,430,870,430,900,475,930,520,985,530,1040,550,1090,550,1130,520,1175,505,1230,535,1250,475,1265,505,1310,518,1360,545,1410,565,1440,490,1478,435,1520,447,1568,450]],[Z9,[0,455,20,475,45,470,85,520,150,510,200,490,260,425,290,425,330,515,350,517,385,505,410,450,445,423,480,437,530,440,575,505,630,537,660,510,680,480,730,495,770,452,820,508,900,465,960,525,980,525,1030,470,1050,480,1065,425,1090,455,1120,455,1155,500,1170,497,1190,520,1210,518,1240,435,1280,432,1300,405,1346,375]]], '#bdbdb0', 1);
  poly(K, [[Z8,[20,483,75,518,110,525,150,510,230,482,360,510,410,490,470,420,520,397,585,382,640,430,710,482,750,465,800,485,875,450,920,480,980,510,1060,540,1090,545,1190,518,1250,505,1340,520,1415,550,1470,470,1510,455,1568,450]],[Z9,[0,455,50,470,100,500,170,517,230,480,290,445,310,450,350,490,380,497,450,440,510,435,570,470,630,512,660,517,700,495,730,495,770,472,840,497,920,478,990,510,1050,487,1080,465,1120,457,1200,500,1250,465,1346,400]]], '#a8a848', 1);
  [[33,640,'#e02020'],[403,635,'#e02020'],[446,620,'#e02020'],[508,639,'#e02020']].forEach(function (m) {
    el(K, 'path', { d: 'M' + (m[0] - 2.5) + ' ' + m[1] + 'h5l-2.500 4z', fill: m[2] });
  });
  el(K, 'path', { d: 'M206 586h4M208 584v4', stroke: '#30d030', 'stroke-width': 1.500 });
  [376, 382, 388, 395, 501].forEach(function (x) { el(K, 'circle', { cx: x, cy: 672, r: 1.300, fill: '#28a838' }); });
  text(K, 4, 577, 'KD隨機(9,3,3)', '#d8d8d8', { size: 11.500 });
  text(K, 78, 577, 'K:59.64 ↓', '#f0f0f0');
  text(K, 128, 577, 'D:56.69 ↑', '#f0ee40');
  [['80.00',586],['60.00',604],['40.00',621],['20.00',638],['0.00',656]].forEach(function (r) { text(K, 1141, r[1], r[0], '#4fd8cc', { anchor: 'end' }); });

  /* mini chart */
  var M = document.getElementById('mini');
  el(M, 'rect', { x: 1143.5, y: 346.5, width: 96, height: 185, fill: 'none', stroke: '#7a1c1c' });
  [411.5, 475.5].forEach(function (y) { line(M, 1143, y, 1240, y, '#7a1c1c'); });
  line(M, 1143, 531.5, 1278, 531.5, '#7a1c1c');
  [363, 378, 394, 427, 443, 458].forEach(function (y) { line(M, 1143, y, 1240, y, '#4c1515', 1, '1 3'); });
  [1165, 1186, 1207, 1227].forEach(function (x) { line(M, x, 346, x, 531, '#4c1515', 1, '1 3'); });
  [['11.00',351],['10.75',367],['10.50',383],['10.25',399]].forEach(function (r) { text(M, 1241, r[1], r[0], '#b04040'); });
  text(M, 1241, 415, '10.00', '#d0d0d0');
  [['9.75',431],['9.50',446],['9.25',462]].forEach(function (r) { text(M, 1241, r[1], r[0], '#4fd8cc'); });
  text(M, 1241, 482, '10', '#4fd8cc');
  text(M, 1242, 525, '即時', '#d0d0d0');
})();
```
